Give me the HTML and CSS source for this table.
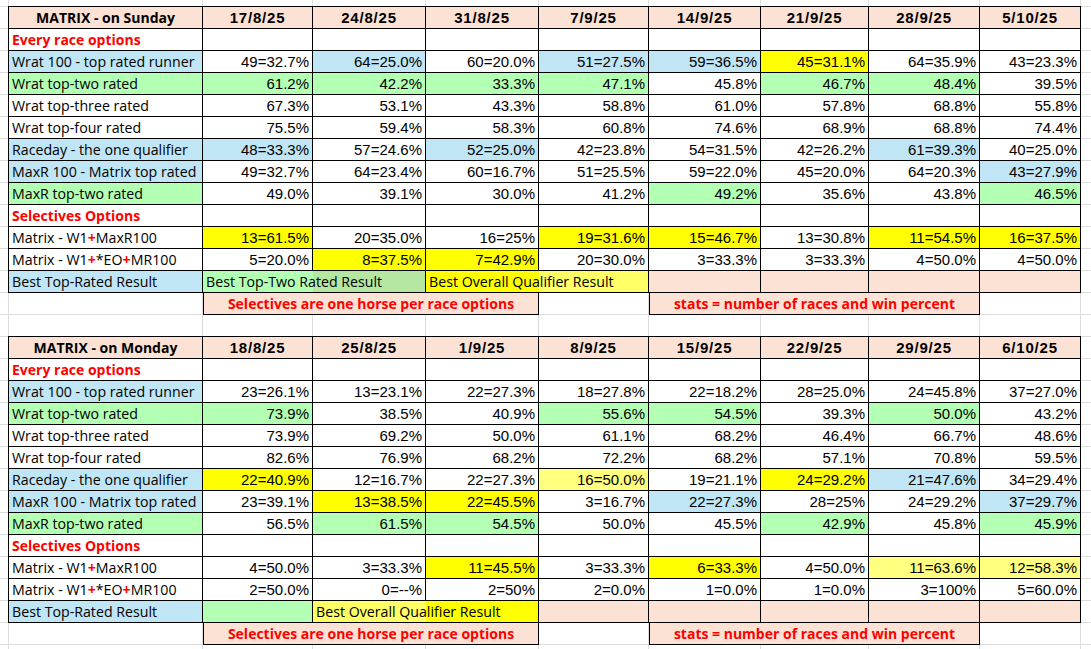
FILE: index.html
```html
<!DOCTYPE html>
<html lang="en">
<head>
<meta charset="utf-8">
<title>Matrix results</title>
<link rel="stylesheet" href="styles.css">
</head>
<body>
<div class="sheet">

<table class="grid">
  <colgroup><col class="ca"><col class="cb"><col class="cc"><col class="cd"><col class="ce"><col class="cf"><col class="cg"><col class="ch"><col class="ci"></colgroup>
  <tr class="hdr">
    <td class="p hd">MATRIX - on Sunday</td><td class="p dt">17/8/25</td><td class="p dt">24/8/25</td><td class="p dt">31/8/25</td><td class="p dt">7/9/25</td><td class="p dt">14/9/25</td><td class="p dt">21/9/25</td><td class="p dt">28/9/25</td><td class="p dt">5/10/25</td>
  </tr>
  <tr><td class="sec">Every race options</td><td></td><td></td><td></td><td></td><td></td><td></td><td></td><td></td></tr>
  <tr><td class="lbl b">Wrat 100 - top rated runner</td><td>49=32.7%</td><td class="b">64=25.0%</td><td>60=20.0%</td><td class="b">51=27.5%</td><td class="b">59=36.5%</td><td class="y">45=31.1%</td><td>64=35.9%</td><td>43=23.3%</td></tr>
  <tr><td class="lbl g">Wrat top-two rated</td><td class="g">61.2%</td><td class="g">42.2%</td><td class="g">33.3%</td><td class="g">47.1%</td><td>45.8%</td><td class="g">46.7%</td><td class="g">48.4%</td><td>39.5%</td></tr>
  <tr><td class="lbl">Wrat top-three rated</td><td>67.3%</td><td>53.1%</td><td>43.3%</td><td>58.8%</td><td>61.0%</td><td>57.8%</td><td>68.8%</td><td>55.8%</td></tr>
  <tr><td class="lbl">Wrat top-four rated</td><td>75.5%</td><td>59.4%</td><td>58.3%</td><td>60.8%</td><td>74.6%</td><td>68.9%</td><td>68.8%</td><td>74.4%</td></tr>
  <tr><td class="lbl b">Raceday - the one qualifier</td><td class="b">48=33.3%</td><td>57=24.6%</td><td class="b">52=25.0%</td><td>42=23.8%</td><td>54=31.5%</td><td>42=26.2%</td><td class="b">61=39.3%</td><td>40=25.0%</td></tr>
  <tr><td class="lbl b">MaxR 100 - Matrix top rated</td><td>49=32.7%</td><td>64=23.4%</td><td>60=16.7%</td><td>51=25.5%</td><td>59=22.0%</td><td>45=20.0%</td><td>64=20.3%</td><td class="b">43=27.9%</td></tr>
  <tr><td class="lbl g">MaxR top-two rated</td><td>49.0%</td><td>39.1%</td><td>30.0%</td><td>41.2%</td><td class="g">49.2%</td><td>35.6%</td><td>43.8%</td><td class="g">46.5%</td></tr>
  <tr><td class="sec">Selectives Options</td><td></td><td></td><td></td><td></td><td></td><td></td><td></td><td></td></tr>
  <tr><td class="lbl">Matrix - W1<span class="plus">+</span>MaxR100</td><td class="y">13=61.5%</td><td>20=35.0%</td><td>16=25%</td><td class="y">19=31.6%</td><td class="y">15=46.7%</td><td>13=30.8%</td><td class="y">11=54.5%</td><td class="y">16=37.5%</td></tr>
  <tr><td class="lbl">Matrix - W1<span class="plus">+</span>*EO<span class="plus">+</span>MR100</td><td>5=20.0%</td><td class="y">8=37.5%</td><td class="y">7=42.9%</td><td>20=30.0%</td><td>3=33.3%</td><td>3=33.3%</td><td>4=50.0%</td><td>4=50.0%</td></tr>
  <tr><td class="lbl b">Best Top-Rated Result</td><td class="lbl split-g" colspan="2">Best Top-Two Rated Result</td><td class="lbl split-y1" colspan="2">Best Overall Qualifier Result</td><td class="p"></td><td class="p"></td><td class="p"></td><td class="p"></td></tr>
  <tr><td class="nb"></td><td class="p note bl" colspan="3">Selectives are one horse per race options</td><td class="nb"></td><td class="p note bl" colspan="3">stats = number of races and win percent</td><td class="nb"></td></tr>
</table>

<table class="grid second">
  <colgroup><col class="ca"><col class="cb"><col class="cc"><col class="cd"><col class="ce"><col class="cf"><col class="cg"><col class="ch"><col class="ci"></colgroup>
  <tr class="hdr">
    <td class="p hd">MATRIX - on Monday</td><td class="p dt">18/8/25</td><td class="p dt">25/8/25</td><td class="p dt">1/9/25</td><td class="p dt">8/9/25</td><td class="p dt">15/9/25</td><td class="p dt">22/9/25</td><td class="p dt">29/9/25</td><td class="p dt">6/10/25</td>
  </tr>
  <tr><td class="sec">Every race options</td><td></td><td></td><td></td><td></td><td></td><td></td><td></td><td></td></tr>
  <tr><td class="lbl b">Wrat 100 - top rated runner</td><td>23=26.1%</td><td>13=23.1%</td><td>22=27.3%</td><td>18=27.8%</td><td>22=18.2%</td><td>28=25.0%</td><td>24=45.8%</td><td>37=27.0%</td></tr>
  <tr><td class="lbl g">Wrat top-two rated</td><td class="g">73.9%</td><td>38.5%</td><td>40.9%</td><td class="g">55.6%</td><td class="g">54.5%</td><td>39.3%</td><td class="g">50.0%</td><td>43.2%</td></tr>
  <tr><td class="lbl">Wrat top-three rated</td><td>73.9%</td><td>69.2%</td><td>50.0%</td><td>61.1%</td><td>68.2%</td><td>46.4%</td><td>66.7%</td><td>48.6%</td></tr>
  <tr><td class="lbl">Wrat top-four rated</td><td>82.6%</td><td>76.9%</td><td>68.2%</td><td>72.2%</td><td>68.2%</td><td>57.1%</td><td>70.8%</td><td>59.5%</td></tr>
  <tr><td class="lbl b">Raceday - the one qualifier</td><td class="y">22=40.9%</td><td>12=16.7%</td><td>22=27.3%</td><td class="py">16=50.0%</td><td>19=21.1%</td><td class="y">24=29.2%</td><td class="b">21=47.6%</td><td>34=29.4%</td></tr>
  <tr><td class="lbl b">MaxR 100 - Matrix top rated</td><td>23=39.1%</td><td class="y">13=38.5%</td><td class="y">22=45.5%</td><td>3=16.7%</td><td class="b">22=27.3%</td><td>28=25%</td><td>24=29.2%</td><td class="b">37=29.7%</td></tr>
  <tr><td class="lbl g">MaxR top-two rated</td><td>56.5%</td><td class="g">61.5%</td><td class="g">54.5%</td><td>50.0%</td><td>45.5%</td><td class="g">42.9%</td><td>45.8%</td><td class="g">45.9%</td></tr>
  <tr><td class="sec">Selectives Options</td><td></td><td></td><td></td><td></td><td></td><td></td><td></td><td></td></tr>
  <tr><td class="lbl">Matrix - W1<span class="plus">+</span>MaxR100</td><td>4=50.0%</td><td>3=33.3%</td><td class="y">11=45.5%</td><td>3=33.3%</td><td class="y">6=33.3%</td><td>4=50.0%</td><td class="py">11=63.6%</td><td class="py">12=58.3%</td></tr>
  <tr><td class="lbl">Matrix - W1<span class="plus">+</span>*EO<span class="plus">+</span>MR100</td><td>2=50.0%</td><td>0=--%</td><td>2=50%</td><td>2=0.0%</td><td>1=0.0%</td><td>1=0.0%</td><td>3=100%</td><td>5=60.0%</td></tr>
  <tr><td class="lbl b">Best Top-Rated Result</td><td class="g"></td><td class="lbl split-y2" colspan="2">Best Overall Qualifier Result</td><td class="p"></td><td class="p"></td><td class="p"></td><td class="p"></td><td class="p"></td></tr>
  <tr><td class="nb"></td><td class="p note bl" colspan="3">Selectives are one horse per race options</td><td class="nb"></td><td class="p note bl" colspan="3">stats = number of races and win percent</td><td class="nb"></td></tr>
</table>

</div>
</body>
</html>
```

FILE: styles.css
```css
html, body {
  margin: 0;
  padding: 0;
  background: #fff;
}

.sheet {
  box-sizing: border-box;
  min-height: 649px;
  padding: 6px 0 0 8px;
  display: flex;
  flex-direction: column;
  align-items: flex-start;
  gap: 21px;
  background-color: #fff;
  background-image:
    linear-gradient(#dcdcdc, #dcdcdc),
    linear-gradient(#dcdcdc, #dcdcdc),
    linear-gradient(#dcdcdc, #dcdcdc),
    linear-gradient(#dcdcdc, #dcdcdc),
    linear-gradient(#dcdcdc, #dcdcdc),
    linear-gradient(#dcdcdc, #dcdcdc),
    linear-gradient(#dcdcdc, #dcdcdc),
    linear-gradient(#dcdcdc, #dcdcdc),
    linear-gradient(#dcdcdc, #dcdcdc),
    linear-gradient(#dcdcdc, #dcdcdc),
    linear-gradient(to bottom, #dcdcdc 1px, transparent 1px);
  background-size:
    1px 100%, 1px 100%, 1px 100%, 1px 100%, 1px 100%,
    1px 100%, 1px 100%, 1px 100%, 1px 100%, 1px 100%,
    100% 22px;
  background-position:
    8px 0, 202px 0, 312px 0, 425px 0, 538px 0,
    648px 0, 760px 0, 868px 0, 979px 0, 1080px 0,
    0 6px;
  background-repeat:
    no-repeat, no-repeat, no-repeat, no-repeat, no-repeat,
    no-repeat, no-repeat, no-repeat, no-repeat, no-repeat,
    repeat;
}

.grid {
  border-collapse: separate;
  border-spacing: 0;
  table-layout: fixed;
  width: 1073px;
  color: #000;
}

.ca { width: 195px; }
.cb { width: 110px; }
.cc { width: 113px; }
.cd { width: 113px; }
.ce { width: 110px; }
.cf { width: 112px; }
.cg { width: 108px; }
.ch { width: 111px; }
.ci { width: 101px; }

.grid tr { height: 22px; }
.grid tr.hdr { height: 23px; }

.grid td {
  box-sizing: border-box;
  padding: 0 3px;
  border-right: 1px solid #000;
  border-bottom: 1px solid #000;
  background: #fff;
  font-family: "Liberation Sans", Arial, sans-serif;
  font-size: 15px;
  line-height: 21px;
  text-align: right;
  white-space: nowrap;
  overflow: hidden;
  vertical-align: bottom;
}

.grid td:first-child { border-left: 1px solid #000; }
.grid tr.hdr td { border-top: 1px solid #000; }

.grid td.bl { border-left: 1px solid #000; }
.grid td.nb {
  border: none;
  background: transparent;
}

/* text kinds */
.grid td.lbl {
  font-family: "Open Sans", "Noto Sans", sans-serif;
  font-size: 14.2px;
  text-align: left;
  padding-left: 3px;
}

.grid td.sec {
  font-family: "Open Sans", "Noto Sans", sans-serif;
  font-size: 14px;
  font-weight: 700;
  color: #ff0000;
  text-align: left;
}

.grid td.hd {
  font-family: "Open Sans", "Noto Sans", sans-serif;
  font-size: 14px;
  font-weight: 700;
  text-align: center;
}

.grid td.dt {
  font-weight: 700;
  font-size: 15px;
  letter-spacing: 0.8px;
  text-align: center;
}

.grid td.note {
  font-family: "Open Sans", "Noto Sans", sans-serif;
  font-size: 14px;
  font-weight: 700;
  color: #ff0000;
  text-align: center;
}

.plus {
  color: #ff0000;
  font-weight: 700;
}

/* fills */
.grid td.p { background: #fbe2d5; }
.grid td.b { background: #c0e6f5; }
.grid td.g { background: #b3ffb3; }
.grid td.y { background: #ffff00; }
.grid td.py { background: #ffff80; }

.grid td.split-g {
  background: linear-gradient(to right, #b3ffb3 0 110px, #b5e6a2 110px 100%);
}
.grid td.split-y1 {
  background: linear-gradient(to right, #ffff00 0 113px, #ffff66 113px 100%);
}
.grid td.split-y2 {
  background: linear-gradient(to right, #ffff66 0 113px, #ffff00 113px 100%);
}
```
